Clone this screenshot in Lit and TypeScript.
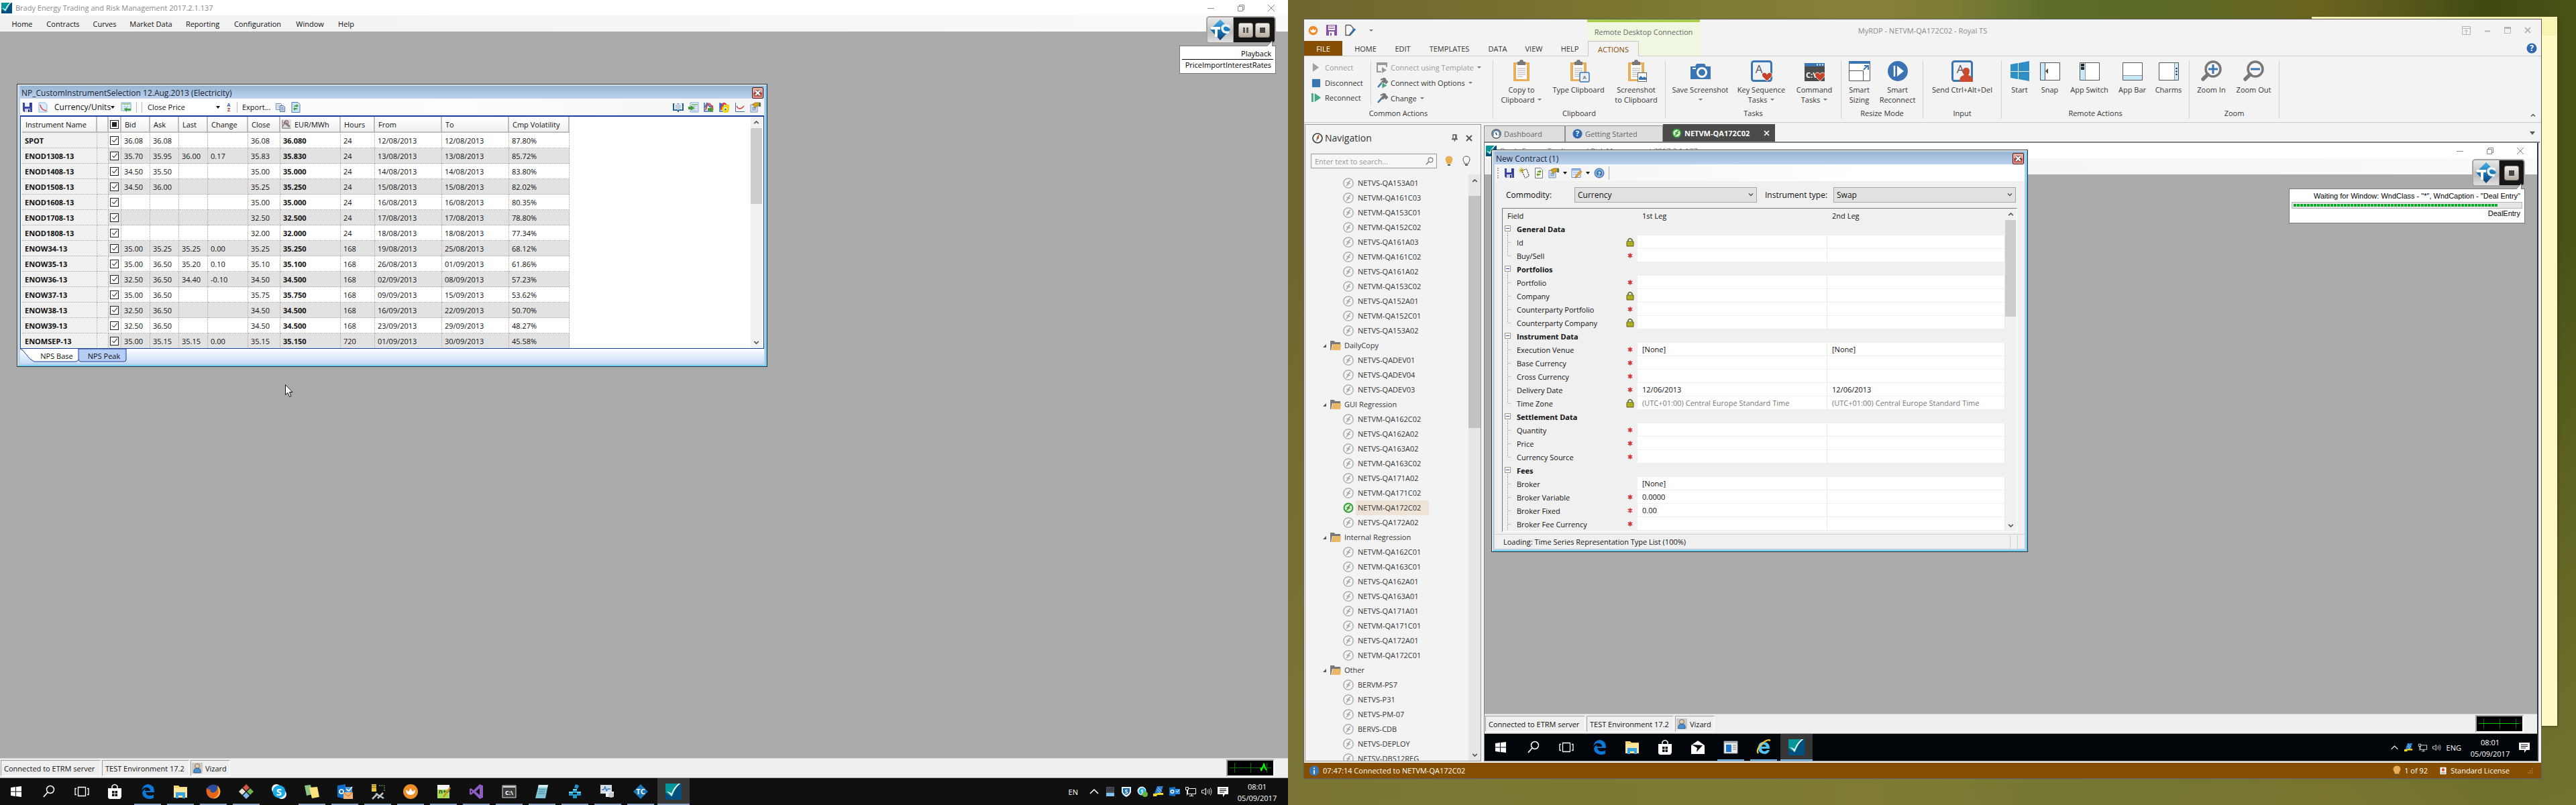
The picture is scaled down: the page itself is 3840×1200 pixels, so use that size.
import { LitElement, html, svg, css } from "lit";
import { customElement, property } from "lit/decorators.js";
import { classMap } from "lit/directives/class-map.js";

/* ---------- shared styles ---------- */
const base = css`
  *,
  *::before,
  *::after {
    box-sizing: border-box;
  }
  :host {
    font-family: "Open Sans", "Noto Sans", sans-serif;
    font-size: 11px;
    line-height: 15px;
    color: #111;
    white-space: nowrap;
  }
  button {
    font: inherit;
    color: inherit;
    background: none;
    border: 0;
    padding: 0;
    margin: 0;
    display: flex;
    align-items: center;
    justify-content: center;
  }
  svg {
    display: block;
    flex: none;
    overflow: visible;
  }
  .row {
    display: flex;
    align-items: center;
  }
  .grow {
    flex: 1;
  }
  .dn {
    width: 0;
    height: 0;
    border: 3px solid transparent;
    border-top: 4px solid currentColor;
    border-bottom: 0;
    flex: none;
  }
  .close {
    width: 17px;
    height: 17px;
    border: 1px solid #43121a;
    border-radius: 2px;
    background: linear-gradient(#e5a79c 0 45%, #b93a2b 50%, #d98676);
    box-shadow: inset 0 0 0 1px #e9b6ae;
  }
  .scroll {
    width: 17px;
    background: #f0f0f0;
    display: flex;
    flex-direction: column;
    color: #555;
  }
  .scroll button {
    height: 17px;
  }
  .thumb {
    background: #cdcdcd;
  }
  .win {
    display: flex;
    flex-direction: column;
    border: 1px solid #2b2f33;
    background: #b9d1ea;
    box-shadow: inset 1px 1px 0 #fff, inset -2px -2px 0 #6fd0f0;
    padding: 2px 4px 4px 4px;
  }
  .wintitle {
    height: 19px;
    display: flex;
    align-items: center;
    justify-content: space-between;
    padding: 1px 1px 0 2px;
    background: linear-gradient(#98b4d2, #bcd3ee);
    color: #1b2430;
    font-size: 12px;
  }
`;

/* ---------- icon helpers ---------- */
const ic = (size: number, body: unknown, box = 16, h = size, boxH = box) =>
  html`<svg width=${size} height=${h} viewBox="0 0 ${box} ${boxH}" aria-hidden="true">${body}</svg>`;

const chevUp = svg`<path d="M4 10l4-4 4 4" fill="none" stroke="#555" stroke-width="2"/>`;
const chevDown = svg`<path d="M4 6l4 4 4-4" fill="none" stroke="#555" stroke-width="2"/>`;
const closeX = svg`<path d="M4 4l8 8M12 4l-8 8" stroke="#4a4a55" stroke-width="5"/><path d="M4 4l8 8M12 4l-8 8" stroke="#fff" stroke-width="3"/>`;
const brady = svg`<path d="M0 0h13Q9 8 7 13 4 12 0 9z" fill="#00969a"/><path d="M0 9q4 4 7 3Q10 8 13 0h3v16H0z" fill="#00507f"/><path d="M1 8q3 1 5 5Q9 4 15 0h-2Q8 4 6 10 4 8 1 8z" fill="#fff"/>`;
const minI = svg`<path d="M0 5.500h10" stroke="#888"/>`;
const restoreI = svg`<path d="M.5 2.500h7v7h-7zM2.500 2.500v-2h7v7h-2" fill="none" stroke="#888"/>`;
const closeI = svg`<path d="M0 0l10 10M10 0L0 10" stroke="#888"/>`;

const floppy = svg`<path d="M1 1h14v14H3l-2-2z" fill="#3b46a8"/><path d="M4 1h8v6H4z" fill="#e8f0ff"/><path d="M11 1h2v6h-2z" fill="#2b3488"/><path d="M4 10h8v5H4z" fill="#cdd4e8"/><path d="M9 11h2v4H9z" fill="#222a66"/>`;
const curveDoc = svg`<path d="M2 1h9l3 3v11H2z" fill="#dcecfb" stroke="#8db4de"/><path d="M4 4q1 8 9 9" fill="none" stroke="#e0463c" stroke-width="1.500"/>`;
const gridArrow = svg`<path d="M1 1h14v12H1z" fill="#eef6fd" stroke="#7ba5cf"/><path d="M2 2h12v2H2z" fill="#9ccb8d"/><path d="M2 7h12M2 10h12M6 4v9M10 4v9" stroke="#a9c4de"/><path d="M5 11l4-3v2h6v2.500H9V15z" fill="#3f9a34"/>`;
const azI = svg`<text x="5" y="8" font-size="7" font-weight="bold" fill="#2a5fa0" text-anchor="middle">A</text><text x="5" y="15" font-size="7" font-weight="bold" fill="#a02c20" text-anchor="middle">Z</text>`;
const copyI = svg`<path d="M1.500 2.500h7l1 1v8h-8z" fill="#fff" stroke="#6b83b5"/><path d="M3 5h4M3 7h4M3 9h4" stroke="#8fa6d4"/><path d="M7.500 5.500h5l2 2v7h-7z" fill="#e3ecfb" stroke="#4a67a8"/><path d="M9 8h4M9 10h4M9 12h4" stroke="#4a74c4"/>`;
const refreshDoc = svg`<path d="M2 .5h9l3 3v12H2z" fill="#cfe3f7" stroke="#4f7fb8"/><path d="M5 7q1-3 4-2V3l3 3-3 2V7Q7 6.500 5 7zM11 9q-1 3-4 2v2l-3-3 3-2v1q2 .5 4 0z" fill="#3da033"/>`;
const refreshPage = svg`<path d="M2.500 .5h8l3 3v12h-11z" fill="#fdfdfd" stroke="#777"/><path d="M5 7q1-3 4-2V3l3 3-3 2V7Q7 6.500 5 7zM11 9q-1 3-4 2v2l-3-3 3-2v1q2 .5 4 0z" fill="#5a9e20"/>`;
const bookI = svg`<path d="M0 2h16v11H9v2H7v-2H0z" fill="#1f5c94"/><path d="M2 2.500q4-1 6 .5 2-1.500 6-.5v9q-4-1-6 .5-2-1.500-6-.5z" fill="#f4f8fc"/><path d="M8 3v9M3.500 5H7M3.500 7H7M3.500 9H7M9 5h3.500M9 7h3.500M9 9h3.500" stroke="#8aa6c0"/>`;
const gridIn = svg`<path d="M3 1h12v14H3z" fill="#eef6fd" stroke="#7ba5cf"/><path d="M5 3h9v2H5z" fill="#8cbf7a"/><path d="M5 7h9M5 10h9M5 13h9M9 5v9" stroke="#9bb6d2"/><path d="M0 7h4V5l5 4-5 4v-2H0z" fill="#3f9a34"/>`;
const chartGo = svg`<path d="M1 1v13h13" fill="none" stroke="#2f6fb8" stroke-width="1.500"/><path d="M2 8l3-6 4 5 5-1" fill="none" stroke="#2d6fd0" stroke-width="2"/><path d="M3 12q3-12 6-9t5 7" fill="none" stroke="#e04040" stroke-width="2"/><path d="M6 9h4V7l5 4.500-5 4V13H6z" fill="#4a9a30"/>`;
const chartLock = svg`<path d="M1 1v13h13" fill="none" stroke="#2f6fb8" stroke-width="1.500"/><path d="M1 2h6v8H1z" fill="#2d6fd0"/><path d="M3 12q2-13 6-9t5 5" fill="none" stroke="#e04040" stroke-width="2.500"/><circle cx="9.500" cy="10.500" r="4" fill="none" stroke="#f2d400" stroke-width="3"/><path d="M9 4h6v4H9z" fill="#f2d400"/><circle cx="9.500" cy="11" r="1.500" fill="#3a8a30"/>`;
const curveI = svg`<path d="M1.500 1v13.500H15" fill="none" stroke="#3a72b8"/><path d="M3 6q4 8 11 0" fill="none" stroke="#e03030" stroke-width="1.500"/>`;
const propsI = svg`<path d="M1 4h10v11H1z" fill="#e4ecf8" stroke="#6f88b4"/><path d="M3 8h6M3 10h6M3 12h6" stroke="#5c7fbc"/><path d="M4 3l4-2h7l1 4-6 1-2 3-2-1 1-3H4z" fill="#d9a520" stroke="#8a6410" stroke-width=".7"/><path d="M13 1h3v6h-3z" fill="#4f7f50"/>`;
const newPage = svg`<path d="M4.500 4l7-2 4 10-6 3.500z" fill="#fff" stroke="#111"  stroke-dasharray="2 1"/><path d="M4 0v8M0 4h8M1.500 1.500l5 5M6.500 1.500l-5 5" stroke="#b8a400"/>`;
const editForm = svg`<path d="M1 1.500h13v13H1z" fill="#e8f1fb" stroke="#6b95c8"/><path d="M1 2h13v2.500H1z" fill="#8fb5e0"/><path d="M3 7h9M3 10h6" stroke="#8fb0d4"/><path d="M14 4l2 2-7 8-3 1.500 1-3.500z" fill="#f0a63c" stroke="#a86a18" stroke-width=".7"/>`;
const helpBlue = svg`<circle cx="8" cy="8" r="7" fill="#6f9fd4" stroke="#3f6ca8"/><circle cx="8" cy="8" r="5" fill="#3d74b8" stroke="#b8d0ea"/><text x="8" y="11.500" text-anchor="middle" font-size="9" font-weight="bold" fill="#fff">?</text>`;
const helpCircle = svg`<circle cx="8" cy="8" r="7.500" fill="#2f69b0"/><text x="8" y="12" text-anchor="middle" font-size="12" font-weight="bold" fill="#fff">?</text>`;
const userI = svg`<path d="M0 0h16v16H0z" fill="#cdc8c4"/><circle cx="8" cy="5" r="3.500" fill="#e0c8a8" stroke="#555" stroke-width=".7"/><path d="M3 15q-1-7 5-7t5 7z" fill="#4a90d0" stroke="#2c5a90"/>`;
const lockI = svg`<path d="M5 7V4.500q3-4 6 0V7" fill="none" stroke="#5c5c20" stroke-width="1.500"/><path d="M3 7h10v7H3z" fill="#c8c820" stroke="#55551a"/><path d="M4 9.500h8M4 12h8" stroke="#8a8a20"/>`;
const starI = svg`<path d="M8 4.500v7M5 6l6 4M11 6l-6 4" stroke="#d8343c" stroke-width="1.800"/>`;
const heat = svg`<path d="M0 0h16v16H0z" fill="#ddd"/><path d="M1 1v14h14" stroke="#666" fill="none"/><path d="M2 12l4-8 8 8M3 5l10 8" stroke="#777" fill="none" stroke-width="1.500"/><circle cx="8" cy="5" r="3" fill="none" stroke="#a06868" stroke-width="1.500"/>`;

/* ribbon, 32 px */
const clip = svg`<path d="M4 3h24v28H4z" fill="#e8ae58"/><path d="M8 6h16v22H8z" fill="#fff"/><path d="M10 2h3a3 3 0 0 1 6 0h3v5H10z" fill="#777"/><path d="M10 12h12M10 15h12M10 18h12M10 21h12M10 24h8" stroke="#aaa"/>`;
const rib: Record<string, unknown> = {
  copy: clip,
  type: svg`${clip}<rect x="18" y="18" width="14" height="14" rx="2" fill="#e8eef5" stroke="#3b76b4" stroke-width="1.500"/><text x="25" y="28" font-size="8" text-anchor="middle" fill="#444">A</text>`,
  shot: svg`${clip}<rect x="18.500" y="18.500" width="13" height="13" fill="#fff" stroke="#666"/><path d="M20 29v-3l3-3 3 3 2-2 3 2v3z" fill="#3b76b4"/>`,
  camera: svg`<path d="M1 9h7l2-4h12l2 4h7v19H1z" fill="#3b76b4"/><circle cx="18" cy="18" r="6.500" fill="none" stroke="#fff" stroke-width="3"/><path d="M4 12h5" stroke="#fff" stroke-width="2"/>`,
  keys: svg`<rect x="1.500" y="1.500" width="29" height="29" rx="3" fill="#eef1f5" stroke="#3b76b4" stroke-width="3"/><text x="12" y="19" font-size="17" text-anchor="middle" fill="#555">A</text><path d="M24 31l-7-7q-2-5 3-6 3 0 4 3 1-3 4-3 5 1 3 6z" fill="#c9432a" stroke="#fff" stroke-width=".8"/>`,
  cmd: svg`<path d="M1 4h30v27H1z" fill="#4c4c4c"/><path d="M1 4h30v5H1z" fill="#3b76b4"/><path d="M19 6.500h2M23 6.500h2M27 6.500h2" stroke="#fff" stroke-width="2"/><text x="3" y="26" font-size="11" font-weight="bold" fill="#fff">C:\\</text><path d="M24 31l-7-7q-2-5 3-6 3 0 4 3 1-3 4-3 5 1 3 6z" fill="#c9432a" stroke="#fff" stroke-width=".8"/>`,
  sizing: svg`<path d="M.5 1.500h31v29H.5z" fill="#fff" stroke="#555"/><path d="M0 1h32v4H0z" fill="#3b76b4"/><path d="M.5 15.500h21v15" fill="none" stroke="#555"/><path d="M22 14l6-6M23 8h6v6" fill="none" stroke="#3b76b4" stroke-width="2"/>`,
  recon: svg`<circle cx="16" cy="16" r="15" fill="#3b72b4"/><path d="M11 8v16" stroke="#fff" stroke-width="2.500"/><path d="M15 8l10 8-10 8z" fill="#fff"/>`,
  cad: svg`<rect x="1.500" y="1.500" width="29" height="29" rx="3" fill="#eef1f5" stroke="#3b76b4" stroke-width="3"/><text x="13" y="19" font-size="17" text-anchor="middle" fill="#555">A</text><path d="M22 11q5 0 5 5 0 4-2 6 7 1 7 9v1H12v-1q0-8 7-9-2-2-2-6 0-5 5-5z" fill="#cb4b30"/>`,
  start: svg`<path d="M2 6l11-2v12H2zM14 4l16-3v15H14zM2 17h11v11L2 26zM14 17h16v14l-16-3z" fill="#2f8fc4"/>`,
  snap: svg`<path d="M1.500 3.500h29v26h-29z" fill="#fff" stroke="#555"/><path d="M2 4h6v25H2z" fill="#c9e8fa"/><path d="M8.500 4v25" stroke="#555"/><path d="M13 12v8l-4-4z" fill="#444"/>`,
  swt: svg`<path d="M1.500 3.500h29v26h-29z" fill="#fff" stroke="#555"/><path d="M2 4h7v25H2z" fill="#c9e8fa"/><path d="M9.500 4v25" stroke="#999"/><path d="M3.500 5.500h4v3h-4zM3.500 10.500h4v3h-4z" fill="#333" stroke="#111"/>`,
  bar: svg`<path d="M1.500 3.500h29v26h-29z" fill="#fff" stroke="#555"/><path d="M2 23h28v6H2z" fill="#c9e8fa"/><path d="M2 22.500h28" stroke="#999"/>`,
  charms: svg`<path d="M1.500 3.500h29v26h-29z" fill="#fff" stroke="#555"/><path d="M25 4h5v25h-5z" fill="#c9e8fa"/><path d="M24.500 4v25" stroke="#999"/><path d="M27.500 11v12" stroke="#111" stroke-width="2" stroke-dasharray="2 2.500"/>`,
  zin: svg`<circle cx="18" cy="13" r="11" fill="#f7f7f7" stroke="#777" stroke-width="3.500"/><path d="M10 21l-7 7" stroke="#777" stroke-width="5.500" stroke-linecap="round"/><path d="M18 6v14M11 13h14" stroke="#3b76b4" stroke-width="3"/>`,
  zout: svg`<circle cx="18" cy="13" r="11" fill="#f7f7f7" stroke="#777" stroke-width="3.500"/><path d="M10 21l-7 7" stroke="#777" stroke-width="5.500" stroke-linecap="round"/><path d="M11 13h14" stroke="#3b76b4" stroke-width="3"/>`,
};

/* taskbar, 24 px */
const task: Record<string, unknown> = {
  win: svg`<path d="M4 6l7-1v6.500H4zM12 5l8-1v7.500h-8zM4 12.500h7V19l-7-1zM12 12.500h8V20l-8-1z" fill="#fff"/>`,
  search: svg`<circle cx="14" cy="9" r="5.500" fill="none" stroke="#fff" stroke-width="1.500"/><path d="M10 13l-6 7" stroke="#fff" stroke-width="1.700"/>`,
  view: svg`<path d="M6.500 5.500h11v13h-11zM4 7.500H2v9h2M20 7.500h2v9h-2" fill="none" stroke="#fff" stroke-width="1.300"/>`,
  store: svg`<path d="M2 7h20v13l-2 3H4l-2-2z" fill="#fff"/><path d="M8 7V4q4-5 8 0v3" fill="none" stroke="#fff" stroke-width="1.500"/><path d="M8 11h3.500v3.500H8zM12.500 11H16v3.500h-3.500zM8 15.500h3.500V19H8zM12.500 15.500H16V19h-3.500z" fill="#111"/>`,
  edge: svg`<path d="M3 11Q5 1 13 1q9 1 9 12H9q1 5 6 5 4 0 6-1.500v5Q18 23 14 23 5 22 4 14q1-4 5-6-1 2-1 3h8q0-4-4-5-6-1-9 5z" fill="#0a78d7"/>`,
  folder: svg`<path d="M2 3h7l2 2h11v16H2z" fill="#f7d775"/><path d="M2 7h20v14H2z" fill="#fbe69b"/><path d="M5 13h14v9h-4v-4H9v4H5z" fill="#38a3de"/>`,
  firefox: svg`<circle cx="12" cy="12" r="10.500" fill="#2b4f9e"/><path d="M2 6q-2 10 5 15 8 4 14-3 4-9-3-15 1 5-1 7-3 5-8 3-3-2-1-4-5 0-6-3z" fill="#e8641b"/><path d="M18 3q5 5 4 12-3 8-10 7 8-3 8-10z" fill="#f6b93b"/>`,
  git: svg`<path d="M12 1l5 5-5 5-5-5z" fill="#d9534a"/><path d="M6 7l5 5-5 5-5-5z" fill="#e8e0d8"/><path d="M18 7l5 5-5 5-5-5z" fill="#6fae52"/><path d="M12 13l5 5-5 5-5-5z" fill="#7fb8e8"/>`,
  skype: svg`<circle cx="8" cy="8" r="7" fill="#fff"/><circle cx="16" cy="16" r="7" fill="#fff"/><circle cx="12" cy="12" r="9.500" fill="#19a9e5"/><text x="12" y="17.500" font-size="15" font-weight="bold" text-anchor="middle" fill="#fff">S</text>`,
  notes: svg`<path d="M1 3l9-1 3 14-9 2z" fill="#8fc487"/><path d="M8 6l12-1 3 15-11 2z" fill="#f9e27e"/>`,
  outlook: svg`<path d="M1 3l12-2v22L1 20z" fill="#0f6fc6"/><circle cx="7" cy="12" r="3" fill="none" stroke="#fff" stroke-width="1.700"/><path d="M13 5h10v9H13z" fill="#3f92dd"/><path d="M14 8l4 3 5-6" fill="none" stroke="#fff" stroke-width="1.500"/><path d="M10 13h14v10H10z" fill="#f0b47a"/><path d="M10 13l7 6 7-6" fill="none" stroke="#a86d33"/>`,
  tools: svg`<path d="M3 1h7v11H3z" fill="#e9c23b"/><path d="M3 3h7M3 6h7" stroke="#8a701c"/><path d="M4 23l8-8M9 15l12 7M20 14l-8 8" stroke="#b8c4cc" stroke-width="2.500"/><path d="M14 3h8v9" fill="none" stroke="#8ac06a" stroke-dasharray="2 1.500"/>`,
  royal: svg`<circle cx="12" cy="12" r="11" fill="#ee8c28"/><path d="M5 9l4 3 3-5 3 5 4-3q0 8-7 8T5 9z" fill="#fff"/>`,
  npp: svg`<path d="M3 2h18v20H3z" fill="#f4f4f4"/><path d="M3 9h18v13H3z" fill="#a9dd5c"/><text x="5" y="15" font-size="9" font-weight="bold" fill="#274a12">n++</text><path d="M22 6L12 20" stroke="#d08c20" stroke-width="2.500"/>`,
  vs: svg`<path d="M17 1l5 2v18l-5 2-9-9-4 3-2-1V8l2-1 4 3zM17 7l-6 5 6 5zM4 10v4l2-2z" fill="#8a5cc4" fill-rule="evenodd"/>`,
  cmdw: svg`<path d="M2 3h20v18H2z" fill="#3c3c3c" stroke="#ddd"/><path d="M3 5h18" stroke="#ddd" stroke-width="2"/><text x="12" y="17" font-size="9" font-weight="bold" text-anchor="middle" fill="#fff">C:\\</text>`,
  note: svg`<path d="M7 2h14l-4 20H2z" fill="#7fc4d4"/><path d="M7 2h14l-1 4H6z" fill="#d4eef4"/><path d="M8 9h9M7 12h9M7 15h9" stroke="#4a8a9c"/>`,
  cubes: svg`<path d="M9 8h6v6H9zM3 12h6v6H3zM15 12h6v6h-6zM9 16h6v6H9zM13 1l5 2-2 5-5-2z" fill="#2196c8"/><path d="M9 8h6v2H9zM3 12h6v2H3zM15 12h6v2h-6z" fill="#6fd0f0"/>`,
  mon: svg`<path d="M1 2h17v13H1z" fill="#d6dde4"/><path d="M3 9h3l2-4 2 6 2-3h4" fill="none" stroke="#3c7cc0" stroke-width="1.500"/><path d="M9 12h12v8H9z" fill="#eef2f5"/><circle cx="17" cy="17" r="4" fill="#c3ccd4"/>`,
  tc: svg`<path d="M12 1l11 11-11 11L1 12z" fill="#1a78b8"/><text x="12" y="16" font-size="11" font-weight="bold" text-anchor="middle" fill="#fff">TC</text>`,
  brady: svg`<g transform="scale(1.5)">${brady}</g>`,
  mail: svg`<path d="M2 9l10-7 10 7v13H2z" fill="#fff"/><path d="M3 8l8 5-1 6 9-10z" fill="#05080c"/>`,
  app: svg`<path d="M2 3h20v18H2z" fill="#eee" stroke="#999"/><path d="M2 3h20v3H2z" fill="#aab4be"/><path d="M5 8h8v11H5z" fill="#1a73d0"/><path d="M15 9h5M15 12h5M15 15h5" stroke="#777"/>`,
  ie: svg`<path d="M4 13Q4 4 12 4q9 0 9 10H9q1 4 4 4t4-2h4q-2 6-8 6-9-1-9-9zM9 11h7q-1-3-4-3-2 0-3 3z" fill="#4fc3f0" fill-rule="evenodd"/><path d="M4 21Q0 16 9 7q9-8 13-5" fill="none" stroke="#f4c430" stroke-width="2.200"/>`,
};

const tray: Record<string, unknown> = {
  up: svg`<path d="M2 11l6-6 6 6" fill="none" stroke="#fff" stroke-width="1.500"/>`,
  bat: svg`<path d="M2 1h12v14H2z" fill="#4a4f58"/><path d="M2 10h12v5H2z" fill="#7fc4f0"/><path d="M3 3h10M3 5h10M3 7h10" stroke="#2a2d33"/>`,
  shield: svg`<path d="M1 1h14v8q-2 5-7 7-5-2-7-7z" fill="#e8f2fa"/><path d="M3 3h10v6q-2 3-5 4-3-1-5-4z" fill="#1b68ac"/><text x="8" y="11" font-size="9" font-weight="bold" text-anchor="middle" fill="#fff">S</text>`,
  sky: svg`<circle cx="7" cy="7" r="6.500" fill="#eaf6fc"/><circle cx="7.500" cy="7.500" r="5" fill="#19a9e5"/><text x="7.500" y="11" font-size="8" font-weight="bold" text-anchor="middle" fill="#fff">S</text><circle cx="12" cy="12" r="4" fill="#6cb33e"/>`,
  key: svg`<path d="M6 0h9l-4 11H2z" fill="#2f7fd0"/><path d="M7 2l6 6M6 5l5 5" stroke="#b8dcff"/><path d="M0 11h6v-1h9v3h-9l-1 2H0z" fill="#f2d820"/>`,
  out: svg`<path d="M0 2l9-1v14l-9-1z" fill="#1270c8"/><circle cx="4.500" cy="8" r="2.300" fill="none" stroke="#fff" stroke-width="1.400"/><path d="M9 4h7v8H9z" fill="#2f8be0"/><path d="M10 7l2 2 3-4" fill="none" stroke="#fff"/>`,
  net: svg`<path d="M3.500 3.500h12v8h-12zM6 14.500h6M9.500 11.500v3" fill="none" stroke="#fff"/><path d="M.5 1.500h4v4h-4z" fill="#111" stroke="#fff"/><path d="M2.500 5.500v8" stroke="#fff"/>`,
  vol: svg`<path d="M.5 6h3l3-3v10l-3-3h-3z" fill="none" stroke="#fff"/><path d="M9 5.500q2 2.500 0 5M11 4q3 4 0 8M13 2.500q4 5.500 0 11" fill="none" stroke="#ddd"/>`,
  act: svg`<path d="M0 1h16v11h-5l-3 4v-4H0z" fill="#fff"/><path d="M3 4h10M3 6.500h10M3 9h7" stroke="#111"/>`,
};

/* ---------- ETRM application frame ---------- */
const menus: [string, number][] = [
  ["Home", 52], ["Contracts", 70], ["Curves", 54], ["Market Data", 84],
  ["Reporting", 70], ["Configuration", 94], ["Window", 62], ["Help", 46],
];

@customElement("etrm-frame")
class EtrmFrame extends LitElement {
  @property({ type: Boolean }) live = false;
  static styles = [
    base,
    css`
      :host {
        display: flex;
        flex-direction: column;
        background: #ababab;
        position: relative;
      }
      header {
        height: 23px;
        flex: none;
        display: flex;
        align-items: center;
        background: #fff;
        color: #8b8b8b;
        padding: 0 20px 0 2px;
        gap: 5px;
      }
      .ctl {
        gap: 35px;
      }
      nav {
        height: 24px;
        flex: none;
        display: flex;
        background: linear-gradient(90deg, #f0f0f0, #fafafa);
        padding-left: 7px;
      }
      main {
        flex: 1;
        min-height: 0;
      }
      footer {
        height: 30px;
        flex: none;
        background: #efefef;
        border-top: 1px solid #d5d5d5;
        border-bottom: 1px solid #a8a8a8;
        display: flex;
        align-items: center;
        gap: 2px;
        padding: 0 20px 0 1px;
      }
      .cell {
        height: 24px;
        min-width: 57px;
        padding: 0 4px;
        gap: 4px;
        border: 1px solid #a0a0a0;
        border-right-color: #fff;
        border-bottom-color: #fff;
      }
      .cell.icon {
        padding-left: 1px;
      }
      .cell.a {
        min-width: 149px;
      }
      .cell.b {
        min-width: 130px;
      }
      .ecg {
        border: 2px solid #a0a0a0;
        border-right-color: #fff;
        border-bottom-color: #fff;
      }
    `,
  ];
  render() {
    return html`
      <header>
        ${ic(16, brady)}<span>Brady Energy Trading and Risk Management 2017.2.1.137</span>
        <span class="grow"></span>
        <div class="row ctl">
          <button aria-label="Minimise">${ic(10, minI, 10)}</button>
          <button aria-label="Restore">${ic(10, restoreI, 10)}</button>
          <button aria-label="Close">${ic(10, closeI, 10)}</button>
        </div>
      </header>
      <nav>${menus.map(([m, w]) => html`<button style="width:${w}px">${m}</button>`)}</nav>
      <main><slot></slot></main>
      <footer>
        <span class="cell a row">Connected to ETRM server</span>
        <span class="cell b row">TEST Environment 17.2</span>
        <span class="cell icon row">${ic(16, userI)}Vizard</span>
        <span class="grow"></span>
        <span class="ecg">${ic(68, svg`<path d="M0 0h68v22H0z"/><path d="M3 10.500h62M10.500 3v15M34.500 3v15M58.500 3v15" stroke="#0a6e0a"/>${
          this.live ? svg`<path d="M50 10v5l4-9v-2l2 7 2 3" fill="none" stroke="#0f0" stroke-width="2"/>` : svg`<path d="M3 10.500h60" stroke="#0c0"/>`
        }`, 68, 22, 22)}</span>
      </footer>
    `;
  }
}

/* ---------- playback badge ---------- */
@customElement("playback-badge")
class PlaybackBadge extends LitElement {
  @property({ type: Boolean }) waiting = false;
  static styles = [
    base,
    css`
      :host {
        display: flex;
        flex-direction: column;
        align-items: flex-end;
      }
      .box {
        height: 41px;
        border: 2px solid #a9a59e;
        border-radius: 5px;
        display: flex;
        overflow: hidden;
        background: linear-gradient(#e8e8e8, #bdbdbd 60%, #e0e0e0);
      }
      .logo {
        width: 39px;
        display: flex;
        align-items: center;
        justify-content: center;
        border-right: 1px solid #999;
      }
      .btns {
        background: #161616;
        display: flex;
        align-items: center;
        gap: 3px;
        padding: 0 7px;
      }
      .btns button {
        width: 22px;
        height: 22px;
        border-radius: 3px;
        border: 1px solid #8d857c;
        background: linear-gradient(#f0eeea, #b7aca2);
      }
      .tip {
        margin-top: 3px;
        background: #fff;
        border: 1px solid #777;
        text-align: right;
        padding: 3px 6px;
        min-width: 144px;
        min-height: 42px;
        color: #000;
        position: relative;
      }
      .tip svg {
        position: absolute;
        right: 4px;
        top: -8px;
      }
      .l1 {
        border-bottom: 1px solid #000;
        margin: 0 -3px;
        padding: 0 3px 1px;
      }
      .tip.w {
        width: 352px;
        min-height: 52px;
        padding: 3px;
        font-family: "Liberation Sans", sans-serif;
      }
      .w .t {
        padding-right: 3px;
      }
      .bar {
        height: 10px;
        margin-top: 1px;
        border: 1px solid #b5b5b5;
        background: #e6e6e6;
        padding: 2px;
      }
      .bar i {
        display: block;
        height: 4px;
        width: 90%;
        background: repeating-linear-gradient(90deg, #06b025 0 4px, #e6e6e6 4px 5px);
      }
    `,
  ];
  render() {
    const logo = svg`<defs><linearGradient id="g" x2="0" y2="1"><stop offset="0" stop-color="#4fb0e6"/><stop offset=".5" stop-color="#1b78b8"/><stop offset="1" stop-color="#0c3f74"/></linearGradient></defs><path d="M17 1l15 15-15 16L2 16z" fill="url(#g)"/><path d="M3 12h14v4h-4v11H9V16H3z" fill="#fff"/><path d="M31 12q-8-5-11 1 0 9 10 7" fill="none" stroke="#eaf4fb" stroke-width="3.500"/>`;
    return html`
      <div class="box">
        <div class="logo">${ic(34, logo, 34)}</div>
        <div class="btns">
          ${this.waiting ? "" : html`<button aria-label="Pause">${ic(8, svg`<path d="M0 0h3v8H0zM5 0h3v8H5z" fill="#555"/>`, 8)}</button>`}
          <button aria-label="Stop">${ic(8, svg`<path d="M0 0h8v8H0z" fill="#444"/>`, 8)}</button>
        </div>
      </div>
      <div class=${classMap({ tip: true, w: this.waiting })}>
        ${ic(8, svg`<path d="M0 8l7-8v8z" fill="#fff"/><path d="M0 7.500L7.500 0v8" fill="none" stroke="#777"/>`, 8)}
        ${this.waiting
          ? html`<div class="t">Waiting for Window: WndClass - "*", WndCaption - "Deal Entry"</div>
              <div class="bar"><i></i></div>
              <div class="t">DealEntry</div>`
          : html`<div class="l1">Playback</div><div>PriceImportInterestRates</div>`}
      </div>
    `;
  }
}

/* ---------- instrument window ---------- */
const cols: [string, number][] = [
  ["Instrument Name", 112], ["", 17], ["#", 19], ["Bid", 43], ["Ask", 43], ["Last", 43], ["Change", 60],
  ["Close", 48], ["EUR/MWh", 90], ["Hours", 51], ["From", 100], ["To", 100], ["Cmp Volatility", 90],
];
const data = [
  "SPOT|36.08|36.08|||36.08|36.080|24|12/08/2013|12/08/2013|87.80%",
  "ENOD1308-13|35.70|35.95|36.00|0.17|35.83|35.830|24|13/08/2013|13/08/2013|85.72%",
  "ENOD1408-13|34.50|35.50|||35.00|35.000|24|14/08/2013|14/08/2013|83.80%",
  "ENOD1508-13|34.50|36.00|||35.25|35.250|24|15/08/2013|15/08/2013|82.02%",
  "ENOD1608-13|||||35.00|35.000|24|16/08/2013|16/08/2013|80.35%",
  "ENOD1708-13|||||32.50|32.500|24|17/08/2013|17/08/2013|78.80%",
  "ENOD1808-13|||||32.00|32.000|24|18/08/2013|18/08/2013|77.34%",
  "ENOW34-13|35.00|35.25|35.25|0.00|35.25|35.250|168|19/08/2013|25/08/2013|68.12%",
  "ENOW35-13|35.00|36.50|35.20|0.10|35.10|35.100|168|26/08/2013|01/09/2013|61.86%",
  "ENOW36-13|32.50|36.50|34.40|-0.10|34.50|34.500|168|02/09/2013|08/09/2013|57.23%",
  "ENOW37-13|35.00|36.50|||35.75|35.750|168|09/09/2013|15/09/2013|53.62%",
  "ENOW38-13|32.50|36.50|||34.50|34.500|168|16/09/2013|22/09/2013|50.70%",
  "ENOW39-13|32.50|36.50|||34.50|34.500|168|23/09/2013|29/09/2013|48.27%",
  "ENOMSEP-13|35.00|35.15|35.15|0.00|35.15|35.150|720|01/09/2013|30/09/2013|45.58%",
].map((r) => r.split("|"));

@customElement("instrument-window")
class InstrumentWindow extends LitElement {
  static styles = [
    base,
    css`
      :host {
        display: block;
      }
      .tools {
        height: 25px;
        background: linear-gradient(90deg, #fafafa, #fdfdfd 60%, #f4f4f4);
        display: flex;
        align-items: center;
        gap: 7px;
        padding: 0 5px 0 3px;
      }
      .cur {
        width: 94px;
        justify-content: space-between;
        padding: 0 2px;
        font-size: 12px;
      }
      .sep {
        width: 1px;
        height: 16px;
        background: #bbb;
      }
      .combo {
        display: grid;
        width: 116px;
        height: 22px;
        align-items: center;
        margin: 0 -3px;
        background: #fff;
      }
      .combo > * {
        grid-area: 1 / 1;
      }
      .combo .dn {
        justify-self: end;
        margin-right: 4px;
      }
      select {
        appearance: none;
        border: 0;
        background: none;
        font: inherit;
        padding: 0 4px;
        color: #111;
      }
      .body {
        border: 1px solid #1c3f9c;
        border-top: 2px solid #1c3f9c;
        background: #fff;
        display: flex;
        padding: 0 2px;
        height: 348px;
        overflow: hidden;
      }
      .pane {
        flex: 1;
        min-width: 0;
      }
      table {
        table-layout: fixed;
        border-collapse: separate;
        border-spacing: 0;
        width: 816px;
      }
      th {
        height: 24px;
        padding: 0 5px;
        text-align: left;
        font-weight: normal;
        background: linear-gradient(#fff, #f0f0f0);
        border-right: 2px solid #bdbdbd;
        border-bottom: 2px solid #bdbdbd;
      }
      td {
        height: 23px;
        padding: 0 4px;
        border-right: 1px dotted #a6a6a6;
        border-bottom: 1px dotted #a6a6a6;
      }
      tbody tr:nth-child(even) td {
        background: #e2e2e2;
      }
      tbody tr td.name {
        background: #f0f0f0;
        font-weight: bold;
      }
      td.b {
        font-weight: bold;
      }
      th .row {
        gap: 5px;
        margin-left: -3px;
      }
      .chk {
        padding: 0 2px;
      }
      input {
        appearance: none;
        width: 13px;
        height: 13px;
        margin: 0;
        border: 1px solid #222;
        background: #fff;
        display: grid;
        place-items: center;
      }
      td input::after {
        content: "";
        width: 4px;
        height: 8px;
        margin-top: -2px;
        border: solid #333;
        border-width: 0 1px 1px 0;
        transform: rotate(40deg);
      }
      th input::after {
        content: "";
        width: 7px;
        height: 7px;
        background: #222;
      }
      .thumb {
        height: 113px;
      }
      .tabs {
        height: 22px;
        background: linear-gradient(#fff, #c6dbf6);
        position: relative;
      }
      .tabs svg {
        position: absolute;
      }
      .tabs .row {
        position: relative;
        height: 20px;
      }
      .t1 {
        width: 87px;
        padding-left: 22px;
      }
      .t2 {
        width: 72px;
        padding-left: 4px;
      }
    `,
  ];
  render() {
    const bt = (n: string, i: unknown) => html`<button aria-label=${n}>${ic(16, i)}</button>`;
    return html`
      <section class="win">
        <div class="wintitle"><span>NP_CustomInstrumentSelection 12.Aug.2013 (Electricity)</span><button class="close" aria-label="Close">${ic(13, closeX)}</button></div>
        <div class="tools">
          ${bt("Save", floppy)}${bt("Curve", curveDoc)}
          <button class="cur">Currency/Units<span class="dn"></span></button>
          ${bt("Import", gridArrow)}<span class="sep"></span><span class="sep"></span>
          <span class="combo"><select aria-label="Price"><option>Close Price</option></select><span class="dn"></span></span>
          <button aria-label="Sort">${ic(10, azI, 10, 17, 17)}</button>
          <span class="sep"></span><button>Export...</button>${bt("Copy", copyI)}${bt("Refresh", refreshDoc)}
          <span class="grow"></span>
          ${bt("Book", bookI)}${bt("Load", gridIn)}${bt("Chart", chartGo)}${bt("Lock chart", chartLock)}${bt("Curve view", curveI)}${bt("Properties", propsI)}
        </div>
        <div class="body">
          <div class="pane">
            <table>
              <colgroup>${cols.map((c) => html`<col style="width:${c[1]}px" />`)}</colgroup>
              <thead>
                <tr>${cols.map(([c]) =>
                  c === "#"
                    ? html`<th class="chk"><input type="checkbox" aria-label="Select all" /></th>`
                    : c === "EUR/MWh"
                      ? html`<th><span class="row">${ic(14, heat)}${c}</span></th>`
                      : html`<th>${c}</th>`)}</tr>
              </thead>
              <tbody>
                ${data.map(
                  (r) => html`<tr>
                    <td class="name">${r[0]}</td><td class="name"></td>
                    <td class="chk"><input type="checkbox" checked aria-label=${r[0]} /></td>
                    ${r.slice(1).map((v, i) => html`<td class=${i === 5 ? "b" : ""}>${v}</td>`)}
                  </tr>`,
                )}
              </tbody>
            </table>
          </div>
          <div class="scroll">
            <button aria-label="Scroll up">${ic(13, chevUp)}</button>
            <div class="thumb"></div><span class="grow"></span>
            <button aria-label="Scroll down">${ic(13, chevDown)}</button>
          </div>
        </div>
        <div class="tabs">
          ${ic(160, svg`<path d="M0 0q4 1 8 7 6 9 13 12h66V0z" fill="#fff"/><path d="M87 0h71v16q0 3-3 3H90q-3-1-3-4z" fill="#b6cdf5" stroke="#1c3f9c"/><path d="M0 0q4 1 8 7 6 9 13 12h62q4-1 4-3" fill="none" stroke="#1c3f9c"/>`, 160, 20, 20)}
          <div class="row"><button class="t1">NPS Base</button><button class="t2">NPS Peak</button></div>
        </div>
      </section>
    `;
  }
}

/* ---------- contract window ---------- */
/* label | marker (l lock, s star) | first leg | second leg | e on a branch's last row; leading # marks a category */
const contract = [
  "#General Data", "Id|l", "Buy/Sell|s|||e",
  "#Portfolios", "Portfolio|s", "Company|l", "Counterparty Portfolio|s", "Counterparty Company|l|||e",
  "#Instrument Data", "Execution Venue|s|[None]|[None]", "Base Currency|s", "Cross Currency|s",
  "Delivery Date|s|12/06/2013|12/06/2013",
  "Time Zone|l|(UTC+01:00) Central Europe Standard Time|(UTC+01:00) Central Europe Standard Time|e",
  "#Settlement Data", "Quantity|s", "Price|s", "Currency Source|s|||e",
  "#Fees", "Broker||[None]", "Broker Variable|s|0.0000", "Broker Fixed|s|0.00", "Broker Fee Currency|s",
].map((r) => r.split("|"));

@customElement("contract-window")
class ContractWindow extends LitElement {
  static styles = [
    base,
    css`
      :host {
        display: block;
      }
      .inner {
        background: #f0f0f0;
        padding: 0 11px;
      }
      .tools {
        height: 25px;
        margin: 0 -11px;
        padding: 0 4px;
        gap: 6px;
        background: linear-gradient(90deg, #f3f3f3, #fff 70%);
      }
      .grip {
        height: 16px;
        border-left: 2px dotted #aaa;
        margin-right: 2px;
      }
      .edge {
        width: 1px;
        height: 20px;
        background: #aaa;
      }
      .form {
        height: 40px;
        gap: 12px;
        padding: 0 2px 0 6px;
        font-size: 12px;
      }
      .form label {
        width: 90px;
      }
      .sel {
        flex: 1;
        display: grid;
        height: 23px;
        align-items: center;
        background: #e1e1e1;
        border: 1px solid #a8a8a8;
      }
      .sel > * {
        grid-area: 1 / 1;
      }
      .sel svg {
        justify-self: end;
        margin-right: 2px;
      }
      select {
        appearance: none;
        border: 0;
        background: none;
        font: inherit;
        padding: 0 4px;
        color: #111;
      }
      .grid {
        border: 1px solid #fff;
        border-top-color: #777;
        border-left-color: #777;
        display: flex;
        height: 483px;
        overflow: hidden;
      }
      .pane {
        flex: 1;
        min-width: 0;
      }
      table {
        table-layout: fixed;
        width: 100%;
        border-collapse: separate;
        border-spacing: 0;
      }
      th {
        text-align: left;
        font-weight: normal;
      }
      td,
      th {
        height: 20px;
        padding: 0;
      }
      .v {
        background: #fff;
        border-bottom: 1px solid #f0f0f0;
        border-right: 1px solid #e8e8e8;
        padding-left: 7px;
      }
      .dim {
        color: #777;
      }
      .h {
        padding-left: 7px;
      }
      .cat {
        font-weight: bold;
      }
      .tree {
        width: 21px;
      }
      .name {
        width: 161px;
      }
      .mark {
        width: 19px;
      }
      .v1 {
        width: 283px;
      }
      .thumb {
        height: 144px;
      }
      .scroll {
        width: 16px;
        margin-right: 1px;
      }
      footer {
        height: 22px;
        margin: 3px -11px 0;
        padding: 0 10px 0 13px;
        border-top: 1px solid #d0d0d0;
        gap: 10px;
      }
      footer i {
        width: 1px;
        height: 20px;
        background: #d0d0d0;
      }
    `,
  ];
  render() {
    const bt = (n: string, i: unknown) => html`<button aria-label=${n}>${ic(16, i)}</button>`;
    const branch = (e: boolean) =>
      ic(20, svg`<path d=${e ? "M7.500 0v10M7.500 10.500h5" : "M7.500 0v20M7.500 10.500h5"} stroke="#999" fill="none" stroke-dasharray="1 1"/>`, 20);
    const node = ic(20, svg`<path d="M7.500 15v5" stroke="#999" stroke-dasharray="1 1"/><rect x="3.500" y="5.500" width="8" height="8" fill="#fff" stroke="#999"/><path d="M5 9.500h5" stroke="#2b4a9c"/>`, 20);
    const row = ([n, m, a, b, e]: string[]) => {
      if (n.startsWith("#")) return html`<tr><td>${node}</td><td class="cat" colspan="4">${n.slice(1)}</td></tr>`;
      const v = classMap({ v: true, dim: n === "Time Zone" });
      return html`<tr>
        <td>${branch(!!e)}</td><td>${n}</td>
        <td>${m === "l" ? ic(16, lockI) : m === "s" ? ic(16, starI) : ""}</td>
        <td class=${v}>${a}</td><td class=${v}>${b}</td>
      </tr>`;
    };
    return html`
      <section class="win">
        <div class="wintitle"><span>New Contract (1)</span><button class="close" aria-label="Close">${ic(13, closeX)}</button></div>
        <div class="inner">
          <div class="tools row">
            <span class="grip"></span>${bt("Save", floppy)}${bt("New", newPage)}${bt("Refresh", refreshPage)}${bt("Properties", propsI)}
            <span class="dn"></span>${bt("Edit", editForm)}<span class="dn"></span>${bt("Help", helpBlue)}<span class="edge"></span>
          </div>
          <div class="form row">
            <label for="com">Commodity:</label>
            <span class="sel"><select id="com"><option>Currency</option></select>${ic(12, chevDown)}</span>
            <label for="ins">Instrument type:</label>
            <span class="sel"><select id="ins"><option>Swap</option></select>${ic(12, chevDown)}</span>
          </div>
          <div class="grid">
            <div class="pane">
              <table>
                <colgroup><col class="tree" /><col class="name" /><col class="mark" /><col class="v1" /><col /></colgroup>
                <thead><tr><th class="h" colspan="3">Field</th><th class="h">1st Leg</th><th class="h">2nd Leg</th></tr></thead>
                <tbody>${contract.map(row)}</tbody>
              </table>
            </div>
            <div class="scroll">
              <button aria-label="Scroll up">${ic(13, chevUp)}</button>
              <div class="thumb"></div><span class="grow"></span>
              <button aria-label="Scroll down">${ic(13, chevDown)}</button>
            </div>
          </div>
          <footer class="row"><span>Loading: Time Series Representation Type List (100%)</span><span class="grow"></span><i></i><i></i></footer>
        </div>
      </section>
    `;
  }
}

/* ---------- taskbar ---------- */
@customElement("task-bar")
class TaskBar extends LitElement {
  @property({ type: Boolean }) remote = false;
  static styles = [
    base,
    css`
      :host {
        display: flex;
        height: 40px;
        background: #101010;
        color: #fff;
        align-items: stretch;
      }
      :host([remote]) {
        background: #02050a;
      }
      .b {
        width: 48px;
        margin-right: 1px;
        border-bottom: 2px solid transparent;
        padding-top: 2px;
      }
      .run {
        background: linear-gradient(#8ba4c8, #8ba4c8) 50% 38px / 40px 2px no-repeat border-box;
      }
      :host([remote]) .run {
        background-image: linear-gradient(#76b9ed, #76b9ed);
      }
      .on {
        background: #363636;
        border-bottom-color: #8ba4c8;
      }
      :host([remote]) .on {
        border-bottom-color: #76b9ed;
      }
      .tray {
        gap: 8px;
        padding-right: 11px;
      }
      .lang {
        margin-right: 8px;
      }
      .clock {
        width: 66px;
        text-align: center;
        line-height: 17px;
        padding-top: 1px;
        margin: 0 2px;
      }
    `,
  ];
  render() {
    const apps = this.remote
      ? "win search view edge folder store mail app* ie* brady!"
      : "win search view store edge* folder* firefox* git* skype notes* outlook* tools* royal* npp* vs* cmdw* note* cubes* mon* tc* brady!";
    const clock = html`<span class="clock">08:01<br />05/09/2017</span>`;
    return html`
      ${apps.split(" ").map((a) => {
        const k = a.replace(/[*!]/, "");
        return html`<button class=${classMap({ b: true, run: a.endsWith("*"), on: a.endsWith("!") })} aria-label=${k}>${ic(24, task[k], 24)}</button>`;
      })}
      <span class="grow"></span>
      <div class="row tray">
        ${this.remote
          ? html`${["up", "key", "net", "vol"].map((k) => ic(13, tray[k]))}<span>ENG</span>${clock}${ic(16, tray.act)}`
          : html`<span class="lang">EN</span>${["up", "bat", "shield", "sky", "key", "out", "net", "vol", "act"].map((k) => ic(16, tray[k]))}${clock}`}
      </div>
    `;
  }
}

/* ---------- remote session manager ---------- */
const tree = (
  "/ NETVS-QA153A01 NETVM-QA161C03 NETVM-QA153C01 NETVM-QA152C02 NETVS-QA161A03 NETVM-QA161C02 NETVS-QA161A02 NETVM-QA153C02 NETVS-QA152A01 NETVM-QA152C01 NETVS-QA153A02 " +
  "/DailyCopy NETVS-QADEV01 NETVS-QADEV04 NETVS-QADEV03 " +
  "/GUI_Regression NETVM-QA162C02 NETVS-QA162A02 NETVS-QA163A02 NETVM-QA163C02 NETVS-QA171A02 NETVM-QA171C02 NETVM-QA172C02 NETVS-QA172A02 " +
  "/Internal_Regression NETVM-QA162C01 NETVM-QA163C01 NETVS-QA162A01 NETVS-QA163A01 NETVS-QA171A01 NETVM-QA171C01 NETVS-QA172A01 NETVM-QA172C01 " +
  "/Other BERVM-PS7 NETVS-P31 NETVS-PM-07 BERVS-CDB NETVS-DEPLOY NETSV-DBS12REG"
).split(" ");

const ribTabs: [string, number][] = [["HOME", 61], ["EDIT", 50], ["TEMPLATES", 89], ["DATA", 55], ["VIEW", 53], ["HELP", 54]];
type RB = [string, string, string, number, boolean?];
const groups: [string, number, RB[]][] = [
  ["Clipboard", 257, [["copy", "Copy to", "Clipboard", 72, true], ["type", "Type Clipboard", "", 98], ["shot", "Screenshot", "to Clipboard", 74]]],
  ["Tasks", 262, [["camera", "Save Screenshot", "", 94, true], ["keys", "Key Sequence", "Tasks", 88, true], ["cmd", "Command", "Tasks", 70, true]]],
  ["Resize Mode", 122, [["sizing", "Smart", "Sizing", 46], ["recon", "Smart", "Reconnect", 68]]],
  ["Input", 117, [["cad", "Send Ctrl+Alt+Del", "", 106]]],
  ["Remote Actions", 280, [["start", "Start", "", 46], ["snap", "Snap", "", 44], ["swt", "App Switch", "", 74], ["bar", "App Bar", "", 54], ["charms", "Charms", "", 54]]],
  ["Zoom", 134, [["zin", "Zoom In", "", 58], ["zout", "Zoom Out", "", 68]]],
];

@customElement("royal-window")
class RoyalWindow extends LitElement {
  static styles = [
    base,
    css`
      :host {
        display: flex;
        flex-direction: column;
        border: 1px solid #5f5f5f;
        background: #f3f3f3;
        color: #333;
      }
      .title {
        height: 32px;
        flex: none;
        display: grid;
        grid-template-columns: 1fr auto 1fr;
        color: #8c8c8c;
      }
      .title > * {
        display: flex;
        align-items: center;
      }
      .qat {
        width: 422px;
        gap: 12px;
        padding-left: 6px;
        color: #555;
      }
      .qat .dn {
        margin-left: 8px;
      }
      .ctx {
        width: 168px;
        height: 32px;
        border-top: 4px solid #a8cf45;
        background: #f0f8e2;
        color: #666;
        justify-content: center;
      }
      .wc {
        justify-content: flex-end;
        gap: 20px;
        padding-right: 15px;
      }
      .tabs {
        height: 23px;
        flex: none;
        display: flex;
        align-items: stretch;
        border-bottom: 1px solid #c9c9c9;
      }
      .file {
        width: 57px;
        background: #854e00;
        color: #fff;
        margin-right: 4px;
      }
      .act {
        width: 76px;
        margin-bottom: -1px;
        border: 1px solid #c9c9c9;
        border-bottom: 0;
        background: #f3f3f3;
        color: #854e00;
      }
      .ctx2 {
        width: 92px;
        background: #f0f8e2;
      }
      .hlp {
        margin: 0 6px 0 auto;
      }
      .ribbon {
        height: 99px;
        flex: none;
        display: flex;
        border-bottom: 1px solid #c9c9c9;
        padding-top: 6px;
      }
      .g {
        height: 87px;
        display: flex;
        flex-direction: column;
        align-items: center;
        border-right: 1px solid #d2d2d2;
      }
      .gb {
        height: 73px;
        display: flex;
        width: 100%;
        justify-content: center;
      }
      .g > span {
        line-height: 16px;
      }
      .rb {
        flex-direction: column;
        justify-content: flex-start;
      }
      .rb svg {
        margin-bottom: 4px;
      }
      .rb .l2 {
        display: flex;
        align-items: center;
        gap: 5px;
        height: 15px;
      }
      .dn {
        color: #777;
        border-width: 3px;
        border-bottom: 0;
      }
      .ca {
        width: 282px;
      }
      .ca .gb {
        justify-content: flex-start;
        padding-left: 11px;
      }
      .c1,
      .c2 {
        display: flex;
        flex-direction: column;
      }
      .c1 {
        width: 89px;
        height: 68px;
        border-right: 1px solid #d2d2d2;
        margin-right: 8px;
      }
      .c1 button,
      .c2 button {
        height: 23px;
        margin-top: -1px;
        margin-bottom: 1px;
        gap: 5px;
        justify-content: flex-start;
      }
      .off {
        color: #9a9a9a;
      }
      .collapse {
        margin: auto 6px 4px auto;
      }
      .work {
        flex: 1;
        min-height: 0;
        display: flex;
        padding: 2px 2px 2px 1px;
        gap: 4px;
      }
      aside {
        width: 263px;
        border: 1px solid #999;
        display: flex;
        flex-direction: column;
      }
      .nh {
        height: 39px;
        padding: 0 12px 0 10px;
        gap: 3px;
        font-size: 14px;
      }
      .nh button + button {
        margin-left: 8px;
      }
      .find {
        gap: 14px;
        padding: 0 12px 0 8px;
        height: 31px;
        align-items: flex-start;
        margin-top: 4px;
      }
      .find label {
        width: 188px;
        height: 22px;
        border: 1px solid #999;
        padding: 0 4px;
        background: #f6f6f6;
        margin-right: -2px;
      }
      .find input {
        border: 0;
        background: none;
        outline: 0;
        font: inherit;
        width: 100%;
        min-width: 0;
        padding: 0 1px;
      }
      .find input::placeholder {
        color: #999;
      }
      .find button {
        padding-top: 3px;
      }
      .list {
        flex: 1;
        min-height: 0;
        display: flex;
        overflow: hidden;
      }
      ul {
        flex: 1;
        margin: -20px 0 0;
        padding: 0;
        list-style: none;
      }
      li {
        height: 22px;
        display: flex;
        align-items: center;
        padding-left: 56px;
        gap: 3px;
      }
      li span {
        line-height: 22px;
        padding: 0 12px 0 3px;
      }
      li.f {
        padding-left: 25px;
        gap: 5px;
      }
      li.f span {
        padding-left: 0;
      }
      li.s span {
        background: #ede3d7;
      }
      .list .scroll {
        width: 18px;
        background: #e6e6e6;
      }
      .list .thumb {
        height: 346px;
        background: #c2c2c2;
      }
      .list .scroll button:first-child {
        height: 32px;
        padding-bottom: 14px;
      }
      .docs {
        flex: 1;
        min-width: 0;
        display: flex;
        flex-direction: column;
      }
      .dt {
        height: 28px;
        flex: none;
        display: flex;
        align-items: flex-end;
        border-bottom: 2px solid #808080;
      }
      .dt button {
        height: 24px;
        justify-content: flex-start;
        gap: 4px;
        padding: 0 10px;
        background: #dedede;
        border: 1px solid #909090;
        border-bottom: 0;
        color: #666;
      }
      .dt .d1 {
        width: 121px;
      }
      .dt .d2 {
        width: 146px;
      }
      .dt .d3 {
        width: 167px;
        height: 26px;
        padding: 0 8px 0 13px;
        background: #4b4b4b;
        border: 0;
        color: #fff;
        font-weight: bold;
      }
      .d3 svg:last-child {
        margin-left: auto;
      }
      .dt .dn {
        margin: auto 7px 10px auto;
        border-width: 4px;
        border-top-width: 5px;
        border-bottom: 0;
        color: #555;
      }
      .rdp {
        flex: 1;
        min-height: 0;
        display: flex;
        flex-direction: column;
        border: 1px solid #808080;
        border-top: 0;
        border-right: 2px solid #333;
        margin-right: 2px;
        position: relative;
      }
      etrm-frame {
        flex: 1;
      }
      contract-window {
        position: absolute;
        left: 10px;
        top: 10px;
        width: 800px;
      }
      playback-badge {
        position: absolute;
        right: 18px;
        top: 24px;
      }
      .status {
        height: 23px;
        flex: none;
        background: #854e00;
        color: #fff;
        gap: 5px;
        padding: 0 12px 0 7px;
      }
      .status .lic {
        margin-left: 12px;
      }
      .grip {
        margin-left: 20px;
      }
    `,
  ];
  render() {
    const srv = (on: boolean) =>
      on
        ? svg`<circle cx="8" cy="8" r="7.500" fill="#2f9a3c"/><circle cx="8" cy="8" r="5.500" fill="#d8f5c8"/><path d="M5 12l3-3-2.500-2M11 4L8 7l2.500 2" fill="none" stroke="#2f8a34" stroke-width="1.500"/>`
        : svg`<circle cx="8" cy="8" r="7.200" fill="#f6f6f6" stroke="#a2a2a2" stroke-width="1.300"/><path d="M5 12l3-3-2.500-2M11 4L8 7l2.500 2" fill="none" stroke="#a2a2a2" stroke-width="1.500"/>`;
    const folder = svg`<path d="M0 1h6l1 2h8v3H3L1 15H0z" fill="#777"/><path d="M4 6h12l-1 9H1.500z" fill="#e9b765"/>`;
    const hammer = svg`<path d="M2 14l7-8" stroke="#3b76b4" stroke-width="2.500"/><path d="M7 8l5-6 4 4-2 2-2-3-3 4M6 3l5-2 3 1" fill="none" stroke="#777" stroke-width="2.200"/>`;
    const bulb = (f: string, s: string) => svg`<path d="M6 1q5 0 5 5 0 2-2 4v2H3v-2Q1 8 1 6q0-5 5-5z" fill=${f} stroke=${s}/><path d="M4 13h4v2H4z" fill="#555"/>`;
    return html`
      <div class="title">
        <div>
          <div class="row qat">
            ${ic(15, task.royal, 24)}
            <button aria-label="Save">${ic(16, svg`<path d="M0 0h16v16H0z" fill="#8b50ad"/><path d="M3 1h10v7H3z" fill="#fff"/><path d="M4 3h8M4 5.500h8" stroke="#8b50ad"/><path d="M4 10h8v6H4z" fill="#fff"/><path d="M6 12h2v4H6z" fill="#8b50ad"/>`)}</button>
            <button aria-label="Edit">${ic(16, svg`<path d="M1 .5h7l4 4V9M8 15.500H1V.5" fill="#fff" stroke="#555" stroke-width="1.300"/><path d="M15 6l-7 8" stroke="#2f6fb0" stroke-width="3"/><path d="M6 16l1-3 2 2z" fill="#333"/>`)}</button>
            <span class="dn"></span>
          </div>
          <div class="row ctx">Remote Desktop Connection</div>
        </div>
        <div>MyRDP - NETVM-QA172C02 - Royal TS</div>
        <div class="wc">
          <button aria-label="Ribbon options">${ic(13, svg`<path d="M.5 .5h12v12H.5zM.5 3.500h12M6.500 12V5M4 8l2.500-2.500L9 8" fill="none" stroke="#b5b5b5"/>`, 13)}</button>
          <button aria-label="Minimise">${ic(10, svg`<path d="M1 6.500h8" stroke="#b5b5b5" stroke-width="2"/>`, 10)}</button>
          <button aria-label="Maximise">${ic(10, svg`<path d="M.5 .5h9v9h-9z" fill="none" stroke="#b5b5b5"/><path d="M0 0h10v3H0z" fill="#b5b5b5"/>`, 10)}</button>
          <button aria-label="Close">${ic(10, svg`<path d="M1 1l8 8M9 1L1 9" stroke="#b5b5b5" stroke-width="2"/>`, 10)}</button>
        </div>
      </div>
      <div class="tabs">
        <button class="file">FILE</button>
        ${ribTabs.map(([t, w]) => html`<button style="width:${w}px">${t}</button>`)}
        <button class="act">ACTIONS</button><span class="ctx2"></span>
        <button class="hlp" aria-label="Help">${ic(16, helpCircle)}</button>
      </div>
      <div class="ribbon">
        <div class="g ca">
          <div class="gb">
            <div class="c1">
              <button class="off">${ic(15, svg`<path d="M2 1l10 7-10 7z" fill="#a0a0a0"/>`)}Connect</button>
              <button>${ic(15, svg`<path d="M1 2h13v13H1z" fill="#3b76b4"/>`)}Disconnect</button>
              <button>${ic(15, svg`<path d="M0 1h3v14H0zM5 1l10 7-10 7z" fill="#3fa983"/>`)}Reconnect</button>
            </div>
            <div class="c2">
              <button class="off">${ic(16, svg`<path d="M1 1h14v13H1z" fill="#f3f3f3" stroke="#9a9a9a" stroke-width="2"/><path d="M1 1h14v3H1z" fill="#9a9a9a"/><path d="M7 7h9v9H7z" fill="#f3f3f3"/><path d="M8 7l7 4.500L8 16z" fill="#9a9a9a"/>`)}Connect using Template<span class="dn"></span></button>
              <button>${ic(16, svg`${hammer}<path d="M8 7l8 4.500L8 16z" fill="#3fa983" stroke="#f3f3f3" stroke-width=".7"/>`)}Connect with Options<span class="dn"></span></button>
              <button>${ic(16, hammer)}Change<span class="dn"></span></button>
            </div>
          </div>
          <span>Common Actions</span>
        </div>
        ${groups.map(
          ([n, w, bs]) => html`<div class="g" style="width:${w}px">
            <div class="gb">
              ${bs.map(
                ([k, a, b, bw, d]) => html`<button class="rb" style="width:${bw}px">
                  ${ic(32, rib[k], 32)}<span>${a}</span>
                  <span class="l2">${b}${d ? html`<span class="dn"></span>` : ""}</span>
                </button>`,
              )}
            </div>
            <span>${n}</span>
          </div>`,
        )}
        <button class="collapse" aria-label="Collapse ribbon">${ic(12, chevUp)}</button>
      </div>
      <div class="work">
        <aside>
          <div class="nh row">
            ${ic(16, svg`<circle cx="8" cy="8" r="7" fill="#fff" stroke="#444" stroke-width="1.700"/><path d="M10 3L9 9 7 7z" fill="#cb4b30" stroke="#cb4b30"/><path d="M6 13l1-6 2 2z" fill="#777"/>`)}
            <span>Navigation</span><span class="grow"></span>
            <button aria-label="Pin">${ic(11, svg`<path d="M3 1h5v6H3zM1 7.500h9M5.500 7v4M7 1v6" fill="none" stroke="#555" stroke-width="1.300"/>`, 11)}</button>
            <button aria-label="Close panel">${ic(10, svg`<path d="M1 1l8 8M9 1L1 9" stroke="#555" stroke-width="2"/>`, 10)}</button>
          </div>
          <div class="find row">
            <label class="row"><input placeholder="Enter text to search..." aria-label="Search" />${ic(12, svg`<circle cx="10" cy="6" r="4.500" fill="none" stroke="#777" stroke-width="1.500"/><path d="M7 9l-6 6" stroke="#777" stroke-width="2"/>`)}</label>
            <button aria-label="Highlight">${ic(12, bulb("#e8ae58", "#e8ae58"), 12, 16, 16)}</button>
            <button aria-label="No highlight">${ic(12, bulb("#fff", "#555"), 12, 16, 16)}</button>
          </div>
          <div class="list">
            <ul>
              ${tree.map((t) =>
                t[0] === "/"
                  ? html`<li class="f">${ic(7, svg`<path d="M6 1v5H1z" fill="#555"/>`, 7)}${ic(16, folder)}<span>${t.slice(1).replace("_", " ")}</span></li>`
                  : html`<li class=${t === "NETVM-QA172C02" ? "s" : ""}>${ic(16, srv(t === "NETVM-QA172C02"))}<span>${t}</span></li>`,
              )}
            </ul>
            <div class="scroll">
              <button aria-label="Scroll up">${ic(13, chevUp)}</button>
              <div class="thumb"></div><span class="grow"></span>
              <button aria-label="Scroll down">${ic(13, chevDown)}</button>
            </div>
          </div>
        </aside>
        <div class="docs">
          <div class="dt">
            <button class="d1">${ic(15, svg`<circle cx="8" cy="8" r="7" fill="#fff" stroke="#555" stroke-width="1.500"/><path d="M4 11a5 5 0 1 1 8 0" fill="none" stroke="#3b76b4" stroke-width="1.500"/><path d="M7 6l2 4" stroke="#555" stroke-width="2"/>`)}Dashboard</button>
            <button class="d2">${ic(15, helpCircle)}Getting Started</button>
            <button class="d3">${ic(15, srv(true))}NETVM-QA172C02${ic(9, svg`<path d="M1 1l7 7M8 1L1 8" stroke="#fff" stroke-width="1.700"/>`, 9)}</button>
            <span class="dn"></span>
          </div>
          <div class="rdp">
            <etrm-frame></etrm-frame>
            <task-bar remote></task-bar>
            <contract-window></contract-window>
            <playback-badge waiting></playback-badge>
          </div>
        </div>
      </div>
      <div class="status row">
        ${ic(16, svg`<circle cx="8" cy="8" r="7.500" fill="#3b76b4"/><path d="M8 3.500v2M8 7v6" stroke="#fff" stroke-width="1.800"/>`)}
        <span>07:47:14 Connected to NETVM-QA172C02</span><span class="grow"></span>
        ${ic(12, bulb("#e8ae58", "#e8ae58"), 12, 16, 16)}<span>1 of 92</span>
        <span class="lic">${ic(12, svg`<path d="M2 1h12v14H2z" fill="#fff"/><circle cx="8" cy="6" r="3" fill="#cb4b30"/><path d="M4 11h8M4 13h8" stroke="#777"/>`)}</span><span>Standard License</span>
        <span class="grip">${ic(10, svg`<path d="M8 2h1M5 5h1M8 5h1M2 8h1M5 8h1M8 8h1" stroke="#c9a878" stroke-width="1.500"/>`, 10)}</span>
      </div>
    `;
  }
}

/* ---------- both desktops ---------- */
@customElement("app-root")
class AppRoot extends LitElement {
  static styles = [
    base,
    css`
      :host {
        display: grid;
        grid-template-columns: 1fr 1fr;
        height: 100vh;
        overflow: hidden;
      }
      .left {
        display: flex;
        flex-direction: column;
        position: relative;
        min-width: 0;
      }
      .left etrm-frame {
        flex: 1;
      }
      instrument-window {
        position: absolute;
        left: 25px;
        top: 125px;
        width: 1119px;
      }
      .left playback-badge {
        position: absolute;
        right: 18px;
        top: 24px;
      }
      .cursor {
        position: absolute;
        left: 425px;
        top: 573px;
      }
      .right {
        position: relative;
        min-width: 0;
        background:
          linear-gradient(transparent 30%, #7b7a3299 75%, #7d7a36cc),
          linear-gradient(90deg, #70652f, #77722f 20%, #7e7c36 33%, #87803c 45%, #7b7c36 52%, #5c6e2a 59%, #5b6a26 68%, #69631f 80%, #5a5a1c 86%, #404a10 93%, #4a5316);
      }
      .note {
        position: absolute;
        left: 1526px;
        right: 28px;
        top: 25px;
        bottom: 118px;
        background: linear-gradient(#f8f4b4 28px, #fdfac4 28px);
        box-shadow: 1px 1px 3px #2228;
      }
      royal-window {
        position: absolute;
        inset: 28px 51px 39px 23px;
      }
    `,
  ];
  render() {
    return html`
      <div class="left">
        <etrm-frame live></etrm-frame>
        <task-bar></task-bar>
        <instrument-window></instrument-window>
        <playback-badge></playback-badge>
        <span class="cursor">${ic(12, svg`<path d="M.5 .5v15l3.500-3 2.500 6 2.500-1-2.500-6h4.500z" fill="#fff" stroke="#111"/>`, 12, 19, 19)}</span>
      </div>
      <div class="right">
        <div class="note"></div>
        <royal-window></royal-window>
      </div>
    `;
  }
}
